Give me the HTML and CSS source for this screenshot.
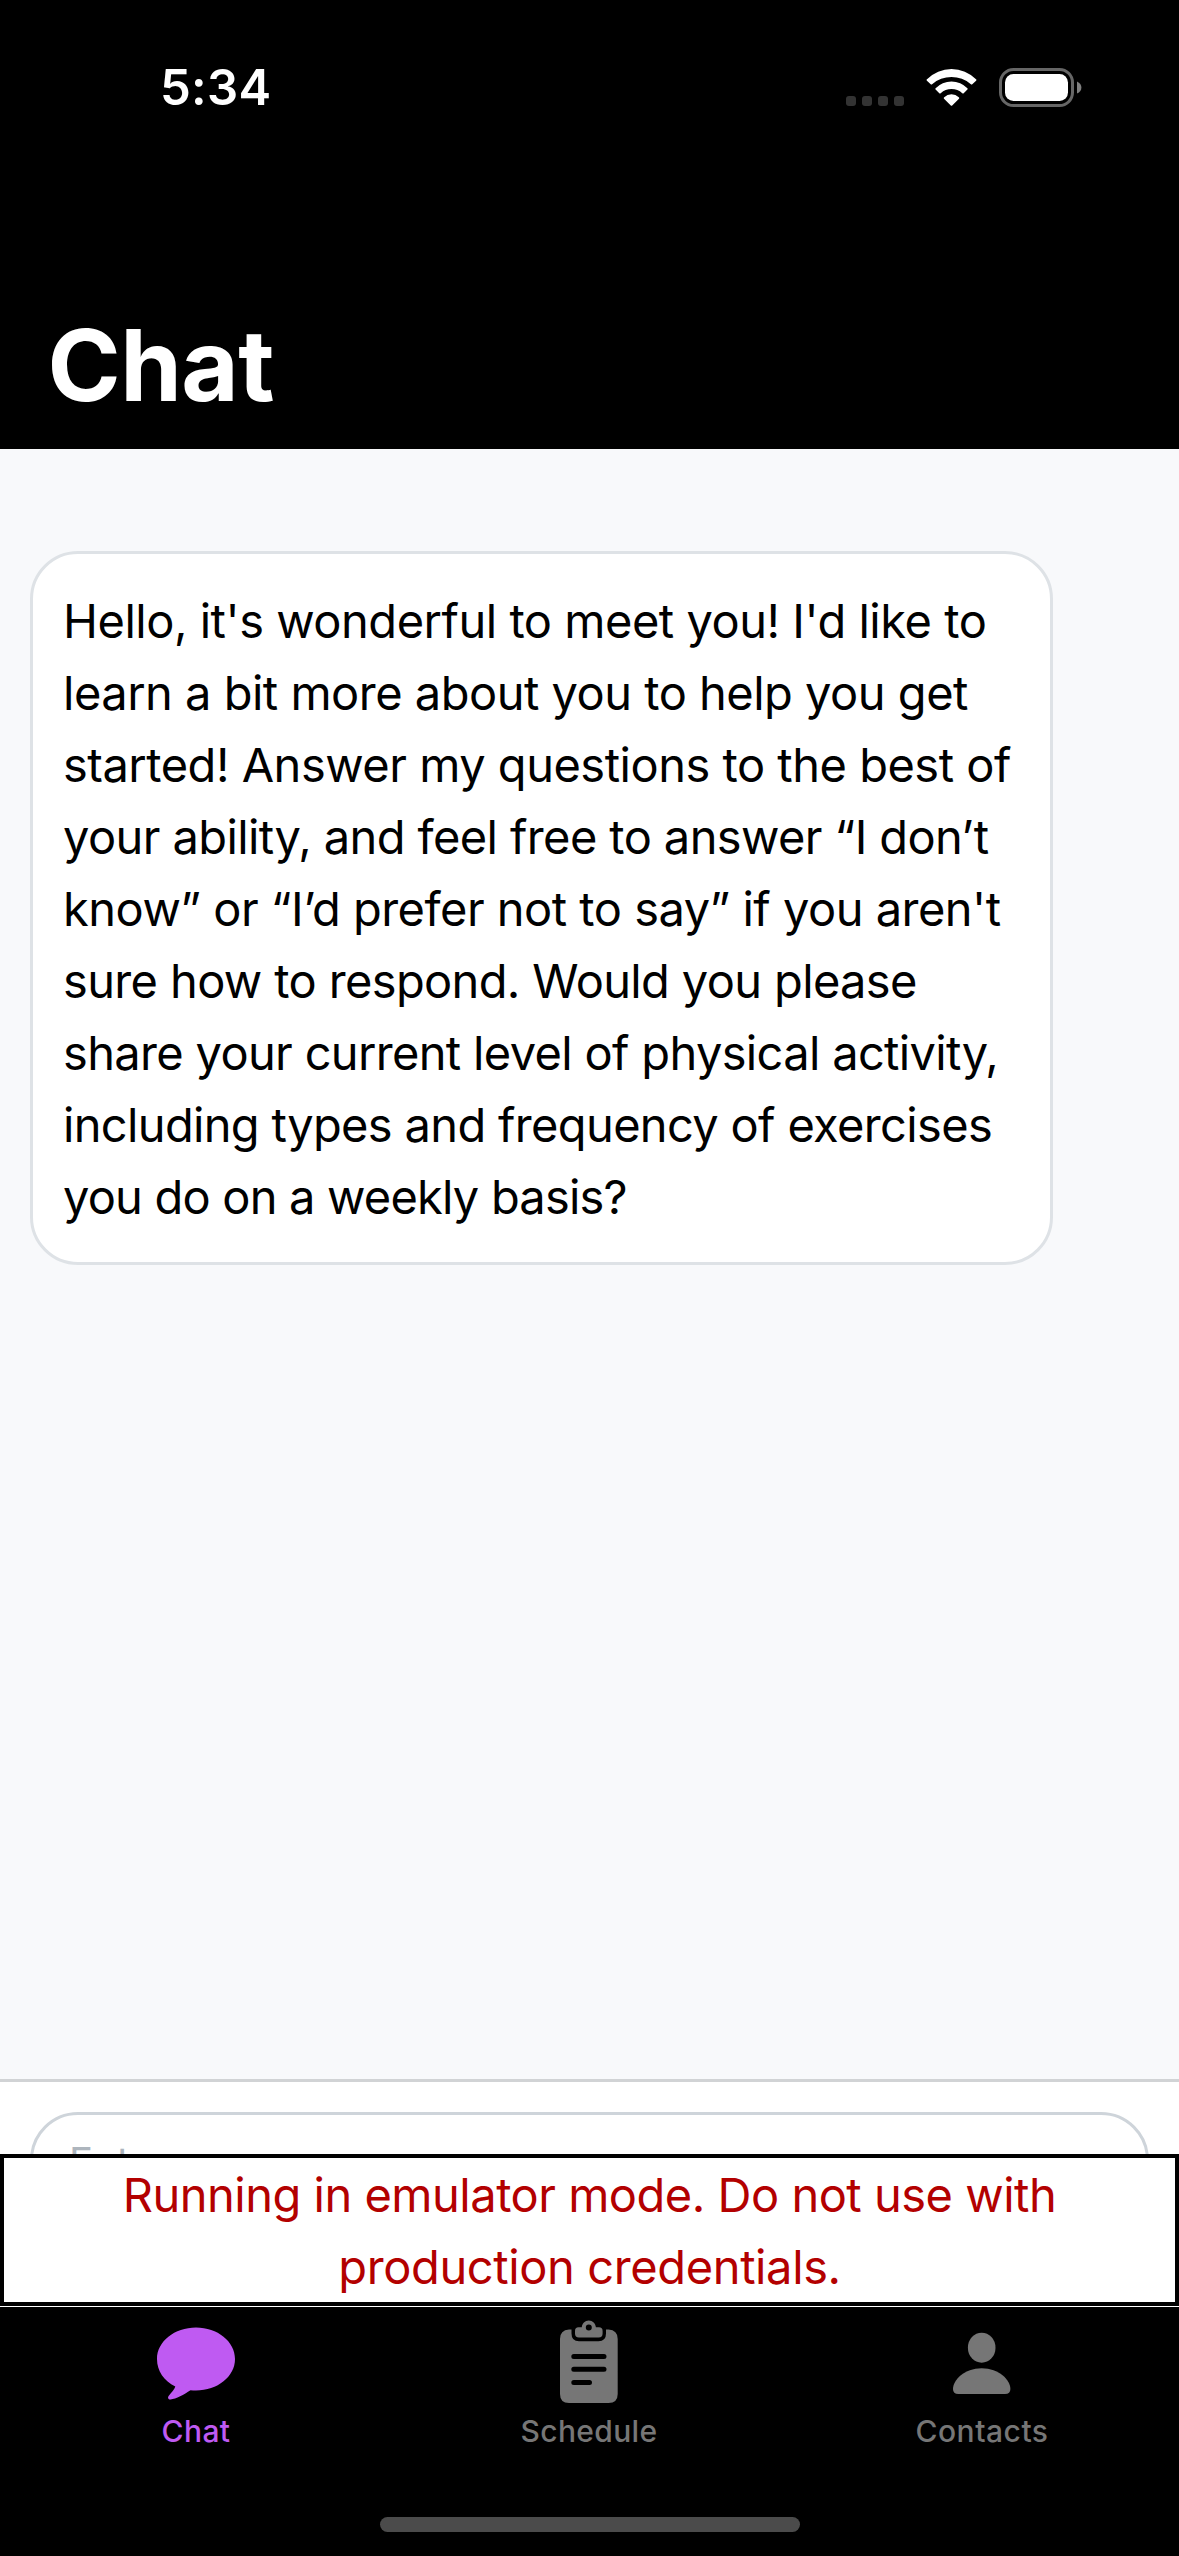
FILE: index.html
```html
<!DOCTYPE html>
<html lang="en">
<head>
<meta charset="utf-8">
<title>Chat</title>
<link rel="stylesheet" href="styles.css">
</head>
<body>
<div class="screen">
  <header class="header">
    <div class="status">
      <span class="time">5:34</span>
      <svg class="indicators" width="236" height="40" viewBox="846 68 236 40">
        <g fill="#333"><rect x="846" y="96" width="10" height="10" rx="3"/><rect x="862" y="96" width="10" height="10" rx="3"/><rect x="878" y="96" width="10" height="10" rx="3"/><rect x="894" y="96" width="10" height="10" rx="3"/></g>
        <g fill="#fff">
          <path d="M927 79.3A34.5 34.5 0 0 1 976 79.3Q976.8 80 976.1 80.7L972.3 84.2Q971.6 84.8 970.9 84.2A29.8 29.8 0 0 0 932.1 84.2Q931.4 84.8 930.7 84.2L926.9 80.7Q926.2 80 927 79.3Z"/>
          <path d="M935.6 88.2A22 22 0 0 1 967.4 88.2Q968.1 88.9 967.4 89.6L963.7 93.2Q963 93.8 962.3 93.2A16 16 0 0 0 940.7 93.2Q940 93.8 939.3 93.2L935.6 89.6Q934.9 88.9 935.6 88.2Z"/>
          <path d="M944.2 97.2A10.5 10.5 0 0 1 958.8 97.2Q959.7 98 959 98.7L952.2 105.5Q951.5 106.2 950.8 105.5L944 98.7Q943.3 98 944.2 97.2Z"/>
          <rect x="1005" y="74" width="63" height="27" rx="8.5"/>
        </g>
        <rect x="1000.5" y="69.5" width="72" height="36" rx="13" fill="none" stroke="#666" stroke-width="3"/>
        <path d="M1077 81.5Q1081.4 83.5 1081.4 87.5Q1081.4 91.5 1077 93.5Z" fill="#808080"/>
      </svg>
    </div>
    <h1 class="title">Chat</h1>
  </header>
  <main class="messages">
    <div class="bubble">
      <span class="line l1">Hello, it's wonderful to meet you! I'd like to</span>
      <span class="line l2">learn a bit more about you to help you get</span>
      <span class="line l3">started! Answer my questions to the best of</span>
      <span class="line l4">your ability, and feel free to answer “I don’t</span>
      <span class="line l5">know” or “I’d prefer not to say” if you aren't</span>
      <span class="line l6">sure how to respond. Would you please</span>
      <span class="line l7">share your current level of physical activity,</span>
      <span class="line l8">including types and frequency of exercises</span>
      <span class="line l9">you do on a weekly basis?</span>
    </div>
  </main>
  <section class="composer">
    <div class="field"><span class="placeholder">Enter a message</span></div>
  </section>
  <aside class="banner">
    <span class="line b1">Running in emulator mode. Do not use with</span>
    <span class="line b2">production credentials.</span>
  </aside>
  <nav class="tabs">
    <a class="tab active">
      <svg class="icon" width="90" height="90" viewBox="151 2316.500 90 90" fill="currentColor"><path d="M196 2327C217.500 2327 235 2341 235 2358.500C235 2376 217.500 2390 196 2390Q193 2390 190.500 2389.800C184 2394 176 2398.500 170.500 2399C168 2399 167.400 2397 168.800 2395.200C171.500 2392 174.500 2389 175.300 2386C164 2380.500 157 2370.500 157 2358.500C157 2341 174.500 2327 196 2327Z"/></svg>
      <span class="label chat">Chat</span>
    </a>
    <a class="tab">
      <svg class="icon" width="90" height="90" viewBox="544 2317 90 90" fill="currentColor"><path fill-rule="evenodd" d="M569 2329.500H571.500V2333.500Q571.500 2341.300 579 2341.300H598.500Q606 2341.300 606 2333.500V2329.500H608.500Q617.700 2330 617.700 2339V2394Q617.700 2403 608.500 2403H569Q560 2403 560 2394V2339Q560 2330 569 2329.500ZM573.800 2354A2.500 2.500 0 0 0 573.800 2359H604A2.500 2.500 0 0 0 604 2354ZM573.800 2366.700A2.500 2.500 0 0 0 573.800 2371.700H604A2.500 2.500 0 0 0 604 2366.700ZM573.800 2380A2.500 2.500 0 0 0 573.800 2385H589.500A2.500 2.500 0 0 0 589.500 2380Z"/><path fill-rule="evenodd" d="M578.500 2327.300H581.800C582 2323.500 585 2320.500 588.800 2320.500C592.600 2320.500 595.700 2323.500 595.900 2327.300H599Q602.600 2327.300 602.600 2331V2333.500Q602.600 2337.500 598.600 2337.500H579Q575 2337.500 575 2333.500V2331Q575 2327.300 578.500 2327.300ZM588.800 2324.600A3 3 0 0 0 588.800 2330.600A3 3 0 0 0 588.800 2324.600Z"/></svg>
      <span class="label schedule">Schedule</span>
    </a>
    <a class="tab">
      <svg class="icon" width="90" height="90" viewBox="937 2317 90 90" fill="currentColor"><ellipse cx="981.700" cy="2347.700" rx="13.800" ry="15"/><path d="M981.700 2368.300C999 2368.300 1010.400 2380 1010.400 2389Q1010.400 2394 1005 2394H958.400Q953 2394 953 2389C953 2380 964.400 2368.300 981.700 2368.300Z"/></svg>
      <span class="label contacts">Contacts</span>
    </a>
  </nav>
  <div class="home"><div class="indicator"></div></div>
</div>
</body>
</html>
```

FILE: styles.css
```css
* { box-sizing: border-box; }
body { margin: 0; background: #000; font-family: Inter, "Liberation Sans", sans-serif; }
.screen { width: 1179px; height: 2556px; display: flex; flex-direction: column; overflow: hidden; }
.header { height: 449px; flex: none; color: #fff; display: flex; flex-direction: column; justify-content: space-between; }
.status { display: flex; justify-content: space-between; align-items: center; padding: 68px 97px 0 160px; }
.time { font-size: 49px; font-weight: 600; line-height: 40px; letter-spacing: 0.3px; }
.indicators { display: block; }
.title { margin: 0; padding: 0 0 24px 47.5px; font-size: 99px; font-weight: 700; line-height: 120px; letter-spacing: -0.5px; }
.messages { height: 1630px; flex: none; background: #f8f9fb; padding: 102px 30px 0; }
.bubble { width: 1023px; height: 714px; padding: 31px 30px 29px; border: 3px solid #dee2e6; border-radius: 48px; background: #fff; }
.line { display: block; font-size: 47px; line-height: 72px; white-space: nowrap; }
.l1 { letter-spacing: -0.475px; }
.l2 { letter-spacing: -0.5px; }
.l3 { letter-spacing: -0.488px; }
.l4 { letter-spacing: -0.596px; }
.l5 { letter-spacing: -0.505px; }
.l6 { letter-spacing: -0.633px; }
.l7 { letter-spacing: -0.66px; }
.l8 { letter-spacing: -0.655px; }
.l9 { letter-spacing: -0.8px; }
.composer { height: 75px; flex: none; background: #fff; border-top: 3px solid #d1d3d5; padding: 30px 30px 0; overflow: hidden; }
.field { height: 120px; border: 3px solid #ced4da; border-radius: 48px; padding: 11px 36px; }
.placeholder { display: block; font-size: 40px; line-height: 72px; color: #adb5bd; }
.banner { height: 152px; flex: none; border: 4px solid #000; padding-top: 1px; background: #fff; color: #b30000; text-align: center; }
.b1 { letter-spacing: -0.49px; }
.b2 { letter-spacing: -0.38px; }
.tabs { height: 180px; flex: none; border-top: 1px solid #fff; display: grid; grid-template-columns: repeat(3, 393px); padding-top: 10px; }
.tab { margin-left: -1px; margin-right: 1px; padding-left: 1px; display: flex; flex-direction: column; align-items: center; color: #767676; }
.tab.active { color: #bf5af2; }
.icon { display: block; }
.label { font-size: 30px; font-weight: 500; line-height: 48px; }
.chat { letter-spacing: 0.4px; }
.schedule { letter-spacing: 0.35px; }
.contacts { letter-spacing: 0.5px; }
.home { flex: 1; display: flex; justify-content: center; padding-top: 31px; }
.indicator { width: 420px; height: 15px; border-radius: 8px; background: #4b4b4b; }
```
